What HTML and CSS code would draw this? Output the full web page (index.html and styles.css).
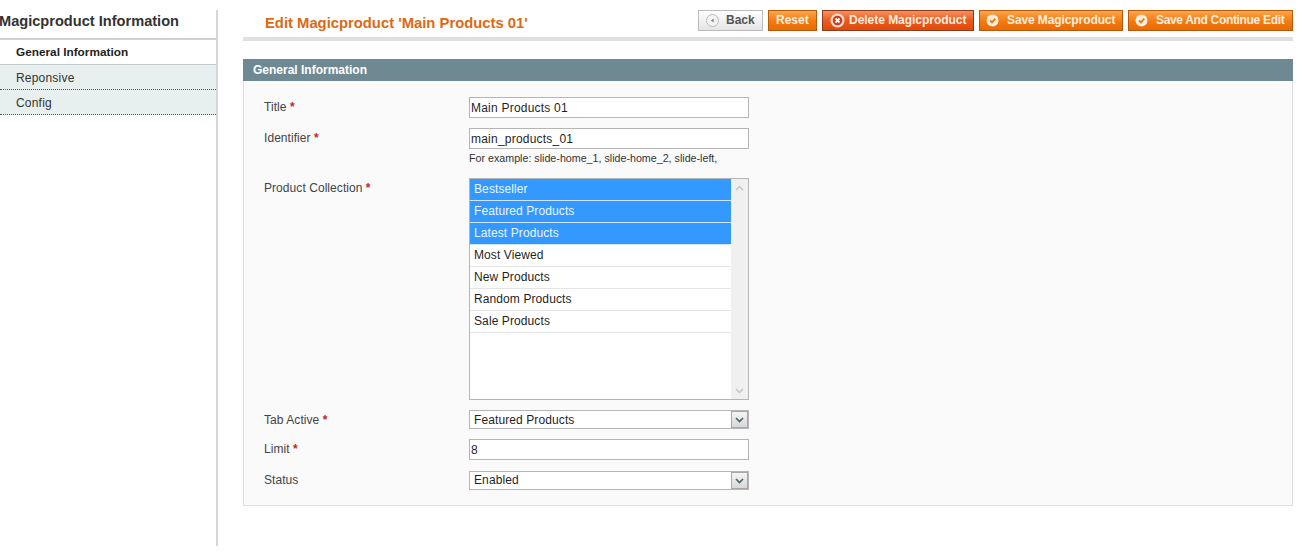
FILE: index.html
```html
<!DOCTYPE html>
<html lang="en">
<head>
<meta charset="utf-8">
<title>Edit Magicproduct</title>
<link rel="stylesheet" href="styles.css">
</head>
<body>
<div class="page">
  <aside class="sidebar">
    <h3 class="side-title">Magicproduct Information</h3>
    <ul class="tabs">
      <li class="tab tab-active">General Information</li>
      <li class="tab">Reponsive</li>
      <li class="tab">Config</li>
    </ul>
  </aside>
  <main class="main">
    <header class="head">
      <h3 class="head-title">Edit Magicproduct 'Main Products 01'</h3>
      <div class="actions">
        <button class="btn btn-back" type="button">
          <svg class="ico" viewBox="0 0 13 13"><circle cx="6.5" cy="6.5" r="6" fill="#f4f4f4" stroke="#bbb"/><path d="M7.6 4.500v4L4.800 6.500z" fill="#888"/></svg>
          Back</button>
        <button class="btn btn-reset" type="button">Reset</button>
        <button class="btn btn-delete" type="button">
          <svg class="ico ico-del" viewBox="0 0 15 15"><circle cx="7.500" cy="7.500" r="7" fill="#f6dccf"/><circle cx="7.500" cy="7.500" r="4.800" fill="#cf3d18"/><path d="M5.500 5.500l4 4M9.500 5.500l-4 4" stroke="#fff" stroke-width="1.800"/></svg>
          Delete Magicproduct</button>
        <button class="btn btn-save" type="button">
          <svg class="ico" viewBox="0 0 13 13"><circle cx="6.500" cy="6.500" r="6" fill="#fbeedd"/><path d="M4 6.500l2 2 3.200-3.800" fill="none" stroke="#e8780f" stroke-width="1.800"/></svg>
          Save Magicproduct</button>
        <button class="btn btn-save btn-continue" type="button">
          <svg class="ico" viewBox="0 0 13 13"><circle cx="6.500" cy="6.500" r="6" fill="#fbeedd"/><path d="M4 6.500l2 2 3.200-3.800" fill="none" stroke="#e8780f" stroke-width="1.800"/></svg>
          Save And Continue Edit</button>
      </div>
    </header>
    <section class="panel">
      <h4 class="panel-head">General Information</h4>
      <div class="panel-body">
        <div class="row row-title">
          <label class="label">Title <span class="req">*</span></label>
          <input class="field" type="text" value="Main Products 01">
        </div>
        <div class="row row-ident">
          <label class="label">Identifier <span class="req">*</span></label>
          <div class="value">
            <input class="field" type="text" value="main_products_01">
            <p class="note">For example: slide-home_1, slide-home_2, slide-left,</p>
          </div>
        </div>
        <div class="row row-list">
          <label class="label">Product Collection <span class="req">*</span></label>
          <div class="listbox">
            <ul class="options">
              <li class="option option-on">Bestseller</li>
              <li class="option option-on">Featured Products</li>
              <li class="option option-on">Latest Products</li>
              <li class="option">Most Viewed</li>
              <li class="option">New Products</li>
              <li class="option">Random Products</li>
              <li class="option">Sale Products</li>
            </ul>
            <div class="scroll">
              <svg class="chev" viewBox="0 0 9 6"><path d="M1 5l3.500-3.500L8 5" fill="none" stroke="#c6c6c6" stroke-width="1.500"/></svg>
              <svg class="chev" viewBox="0 0 9 6"><path d="M1 1l3.500 3.500L8 1" fill="none" stroke="#c6c6c6" stroke-width="1.500"/></svg>
            </div>
          </div>
        </div>
        <div class="row row-tab">
          <label class="label">Tab Active <span class="req">*</span></label>
          <div class="select select-tab">
            <span class="select-text">Featured Products</span>
            <span class="select-arrow"><svg class="arrow" viewBox="0 0 9 6"><path d="M1 1l3.500 3.500L8 1" fill="none" stroke="#4d6168" stroke-width="1.700"/></svg></span>
          </div>
        </div>
        <div class="row row-limit">
          <label class="label">Limit <span class="req">*</span></label>
          <input class="field" type="text" value="8">
        </div>
        <div class="row row-status">
          <label class="label">Status</label>
          <div class="select">
            <span class="select-text">Enabled</span>
            <span class="select-arrow"><svg class="arrow" viewBox="0 0 9 6"><path d="M1 1l3.500 3.500L8 1" fill="none" stroke="#4d6168" stroke-width="1.700"/></svg></span>
          </div>
        </div>
      </div>
    </section>
  </main>
</div>
</body>
</html>
```
FILE: styles.css
```css
* { box-sizing: border-box; }
html, body { margin: 0; padding: 0; background: #fff; }
body { font: 12px/15px "Liberation Sans", Arial, sans-serif; color: #2f2f2f; overflow: hidden; }
.page { display: flex; align-items: flex-start; padding-top: 10px; height: 553px; }

.sidebar { width: 218px; height: 536px; border-right: 2px solid #d6d6d6; flex: none; }
.side-title { margin: 0 0 0 -1px; height: 30px; font-size: 14.600px; line-height: 22px; font-weight: bold; color: #333; border-bottom: 2px solid #d0d0d0; white-space: nowrap; }
.tabs { list-style: none; margin: 0; padding: 0; }
.tab { height: 25px; padding: 1px 0 0 16px; line-height: 24px; background: #e7efef; border-bottom: 1px dotted #555; color: #333; letter-spacing: .2px; }
.tab-active { padding-top: 0; letter-spacing: 0; background: #fff; font-weight: bold; color: #222; border-bottom: 1px solid #c0cccc; font-size: 11.800px; }

.main { width: 1050px; margin-left: 25px; flex: none; }
.head { display: flex; justify-content: space-between; height: 31px; border-bottom: 4px solid #dfdfdf; margin-bottom: 18px; }
.head-title { margin: 3px 0 0 22px; font-size: 14.800px; line-height: 20px; font-weight: bold; color: #dd6a12; white-space: nowrap; }
.actions { display: flex; gap: 5px; height: 21px; }
.btn { display: flex; align-items: center; gap: 7px; height: 21px; padding: 0 0 0 6px; font: bold 12px/15px "Liberation Sans", Arial, sans-serif; color: #ffeedd; border: 1px solid #b85a0a; background: linear-gradient(#fda54a, #f47a10 55%, #e76a06); white-space: nowrap; }
.btn-back { width: 65px; color: #555; border-color: #bbb; background: linear-gradient(#fff, #e4e4e4); padding-left: 7px; gap: 7px; }
.btn-reset { width: 49px; padding-left: 7px; }
.btn-delete { width: 152px; border-color: #8f3a1c; background: linear-gradient(#f98f5c, #ea5a1f 50%, #e04a0a); padding-left: 7px; gap: 4px; letter-spacing: -.03px; }
.btn-save { width: 144px; padding-left: 6px; gap: 8px; letter-spacing: -.1px; }
.btn-continue { width: 165px; letter-spacing: -.33px; }
.ico { width: 13px; height: 13px; flex: none; }
.ico-del { width: 15px; height: 15px; }

.panel-head { margin: 0; height: 22px; padding: 0 10px; background: #6f8992; color: #fff; font-size: 12px; line-height: 22px; font-weight: bold; }
.panel-body { height: 425px; padding: 16px 0 0 20px; background: #fafafa; border: 1px solid #dfdfdf; border-top: 0; }
.row { display: flex; }
.label { width: 205px; flex: none; padding-top: 3px; color: #444; letter-spacing: .06px; }
.req { color: #c0252b; font-weight: bold; }
.field { display: block; width: 280px; height: 21px; padding: 0 1px; border: 1px solid #b5b5b5; background: #fff; font: 12px/17px "Liberation Sans", Arial, sans-serif; letter-spacing: .22px; color: #1f1f1f; outline: 0; border-radius: 0; }
.value { width: 280px; }
.note { margin: 2px 0 0; font-size: 10.700px; line-height: 14px; color: #333; white-space: nowrap; }
.row-ident { margin-top: 10px; }
.row-list { margin-top: 13px; }
.row-tab { margin-top: 10px; }
.row-limit { margin-top: 10px; }
.row-status { margin-top: 11px; }
.row-status .label { padding-top: 2px; }

.listbox { display: flex; width: 280px; height: 222px; border: 1px solid #b5b5b5; background: #fff; }
.options { list-style: none; margin: 0; padding: 0; flex: 1; }
.option { height: 22px; padding-left: 4px; line-height: 20px; border-bottom: 1px solid #e4e4e4; color: #1f1f1f; letter-spacing: .1px; }
.option-on { background: #3399ff; color: #eef6ff; border-bottom-color: #cfe6ff; }
.scroll { display: flex; flex-direction: column; justify-content: space-between; align-items: center; width: 17px; flex: none; padding: 6px 0 5px; background: #f0f0f0; }
.chev { width: 9px; height: 6px; display: block; }

.select { display: flex; width: 280px; height: 19px; border: 1px solid #b5b5b5; background: #fff; }
.select-text { flex: 1; padding-left: 4px; line-height: 16px; color: #1f1f1f; letter-spacing: .1px; }
.select-tab .select-text { line-height: 18px; }
.select-arrow { display: flex; align-items: center; justify-content: center; width: 17px; flex: none; background: linear-gradient(#f4f4f4, #d8d8d8); border: 1px solid #a8a8a8; }
.arrow { width: 9px; height: 6px; display: block; }
```
